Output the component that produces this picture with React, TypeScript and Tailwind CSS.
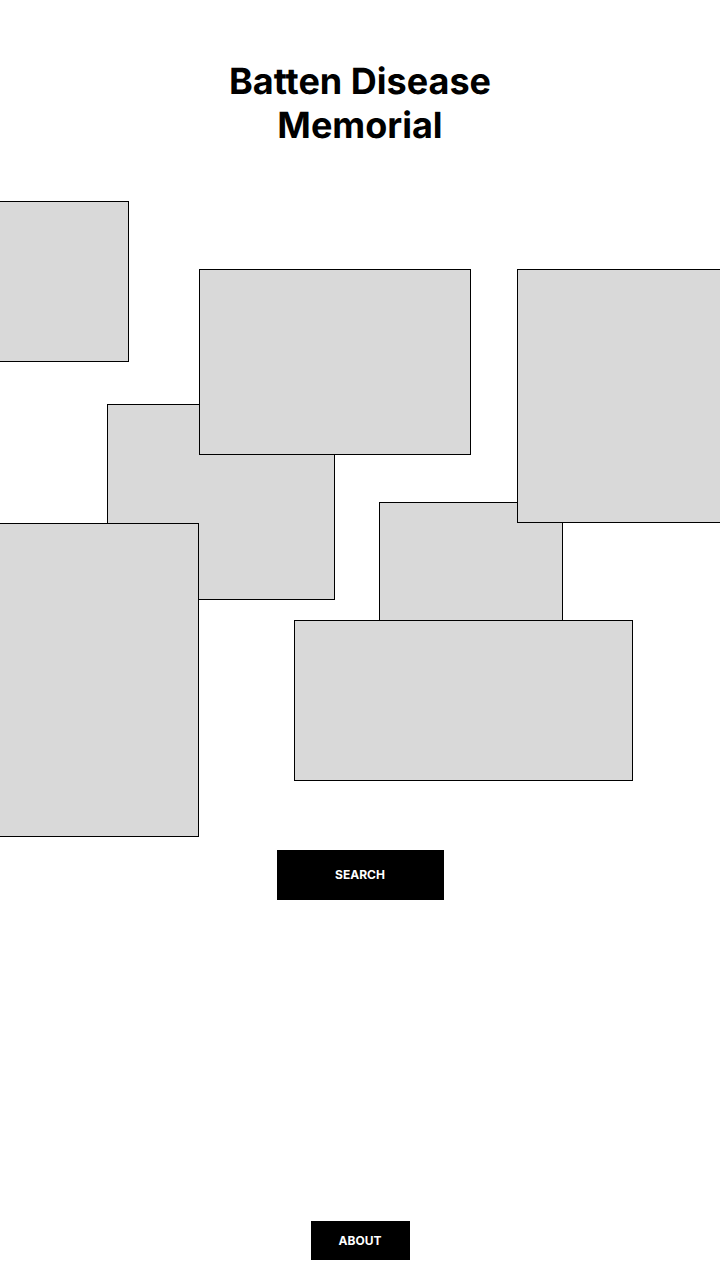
const frames = [
  "top-0 -left-8 h-[161px] w-[161px]",
  "top-[203px] left-[107px] h-[196px] w-[228px]",
  "top-[68px] left-[199px] h-[186px] w-[272px]",
  "top-[301px] left-[379px] h-[140px] w-[184px]",
  "top-[68px] left-[517px] h-[254px] w-[240px]",
  "top-[419px] left-[294px] h-[161px] w-[339px]",
  "top-[322px] -left-8 h-[314px] w-[231px]",
];

function Collage() {
  return (
    <section aria-label="Photographs" className="relative h-[636px] w-full overflow-hidden">
      {frames.map((place) => (
        <div key={place} className={`absolute border border-black bg-[#d9d9d9] ${place}`} />
      ))}
    </section>
  );
}

export default function App() {
  return (
    <div className="flex min-h-screen flex-col items-center bg-white pb-5 font-['Inter',sans-serif] text-black [text-rendering:geometricPrecision]">
      <header className="px-6 pt-[59px] pb-[54px]">
        <h1 className="max-w-80 text-center text-[36px] leading-[44px] font-bold">
          Batten Disease Memorial
        </h1>
      </header>
      <main className="flex w-full flex-col items-center gap-[13px]">
        <Collage />
        <button type="button" className="h-[50px] w-[167px] bg-black text-xs font-bold text-white">
          SEARCH
        </button>
      </main>
      <footer className="mt-auto">
        <button type="button" className="h-[39px] w-[99px] bg-black text-xs font-bold text-white">
          ABOUT
        </button>
      </footer>
    </div>
  );
}
